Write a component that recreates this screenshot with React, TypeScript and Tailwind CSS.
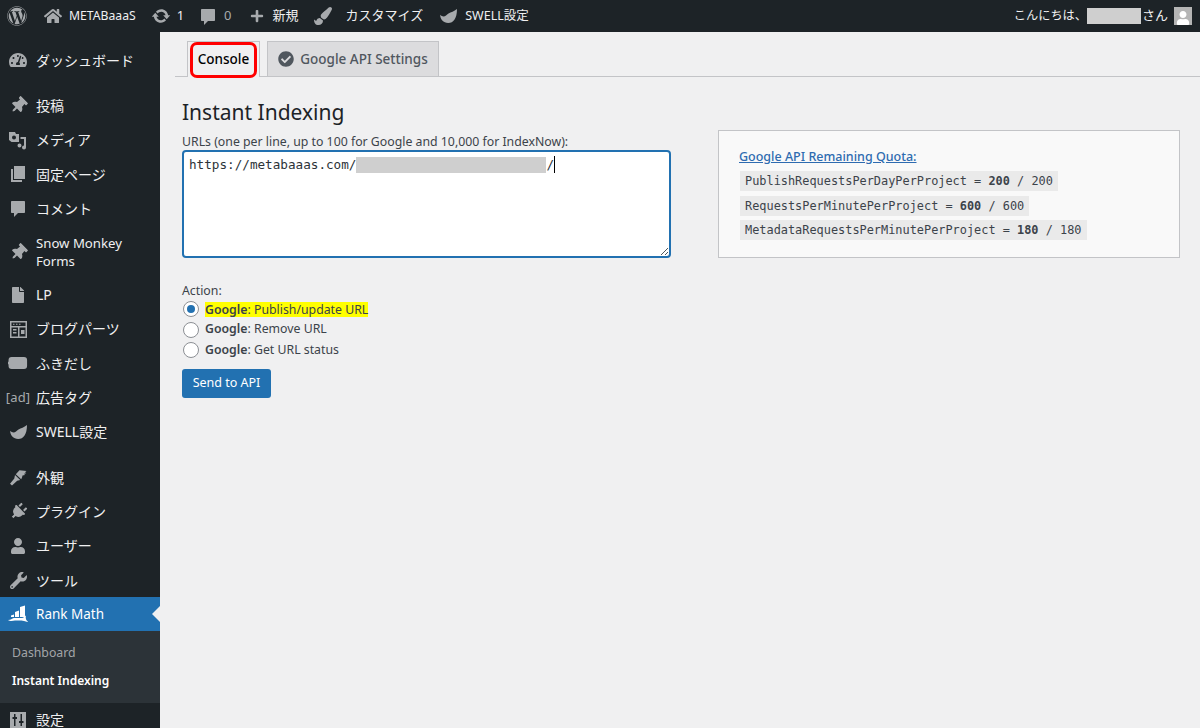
import React from "react";
import { FaWordpress, FaHome, FaPaintBrush, FaPlus, FaThumbtack, FaTachometerAlt, FaFile, FaUser, FaWrench, FaPlug, FaCheckCircle } from "react-icons/fa";

const font = "font-['Noto_Sans','Noto_Sans_CJK_JP',sans-serif]";

function Swell({ s = 20 }: { s?: number }) {
  return (
    <svg width={s} height={s} viewBox="0 0 20 20" fill="currentColor">
      <path d="M19 3c-3 2.500-6 3-8.500 4.500-2 1.200-3 3-5 3-1.200 0-2.300-.8-3.300-1.700-.3 4.200 3.300 8.200 8 8.200 5.300 0 8.800-4.500 8.800-14z" />
    </svg>
  );
}
function Sync() {
  return (
    <svg width="20" height="20" viewBox="0 0 20 20" fill="currentColor">
      <path d="M10.200 3.280c3.530 0 6.430 2.610 6.920 6h2.080l-3.500 4-3.500-4h2.320c-.45-1.970-2.210-3.450-4.320-3.450-1.450 0-2.730.71-3.540 1.780L4.950 5.660C6.230 4.200 8.110 3.280 10.200 3.280zm-.4 13.440c-3.520 0-6.430-2.610-6.920-6H.8l3.500-4c1.170 1.330 2.330 2.670 3.500 4H5.480c.45 1.970 2.210 3.450 4.320 3.450 1.450 0 2.730-.71 3.540-1.780l1.710 1.950c-1.280 1.460-3.150 2.380-5.250 2.380z" />
    </svg>
  );
}
function Comment() {
  return (
    <svg width="20" height="20" viewBox="0 0 20 20" fill="currentColor">
      <path d="M4 3h12c.6 0 1 .4 1 1v10c0 .6-.4 1-1 1h-6l-4 4v-4H4c-.6 0-1-.4-1-1V4c0-.6.4-1 1-1z" />
    </svg>
  );
}
function Appearance() {
  return (
    <svg width="20" height="20" viewBox="0 0 20 20" fill="currentColor">
      <path d="M7.800 7.200L11.500 3.200l7 .8-1.500 1.200 1.300 1-2.300.6 1 1.300-2.500.3L14 10.500l-.8 1.800z" />
      <path d="M7 8l5.200 5-3 .8L4 18.500 2 16.800l4.300-5.300z" />
    </svg>
  );
}
function Media() {
  return (
    <svg width="20" height="20" viewBox="0 0 20 20" fill="currentColor">
      <path d="M1 2h6l1 2h3v8H3.500L1 10zM6 5.500a2 2 0 100 4 2 2 0 000-4z" fillRule="evenodd" />
      <path d="M12.500 7H18v10.500a2 2 0 11-2-2V9h-3.500zM11.500 13.500a2 2 0 110 4 2 2 0 010-4z" />
    </svg>
  );
}
function Pages() {
  return (
    <svg width="20" height="20" viewBox="0 0 20 20" fill="currentColor">
      <path d="M6 2h11v13H6z" />
      <path d="M3 5h2v11h9v2H3z" />
    </svg>
  );
}
function Layout() {
  return (
    <svg width="20" height="20" viewBox="0 0 20 20" fill="currentColor" fillRule="evenodd">
      <path d="M2 2h17v17H2zM3.500 3.500v3.500h14V3.500zM3.500 8.500v9H10v-9zM11.500 8.500v9h6v-9z" />
      <path d="M5 4.800h1.500v1H5zM8 4.800h1.500v1H8zM11 4.800h1.500v1H11zM5 10h3.500v1.500H5zM5 13h3.500v1.500H5zM13 11h3.500v4H13z" />
    </svg>
  );
}
function Bubble() {
  return (
    <svg width="20" height="20" viewBox="0 0 20 20" fill="currentColor">
      <path d="M4.500 4h12a3 3 0 013 3v6a3 3 0 01-3 3h-12a3 3 0 01-3-3v-1.500L0 10l1.500-1.500V7a3 3 0 013-3z" transform="translate(-1 0) scale(1.03 1)" />
    </svg>
  );
}
function RankMath() {
  return (
    <svg width="22" height="20" viewBox="0 0 22 20" fill="currentColor">
      <path d="M13 3l5-1.500V13h-5zM8 8l4-1.500V13H8zM4 11.500l3-1V13H4z" />
      <path d="M1 16c3 0 5-2 6-2h8c1.500 0 2-1.500 4-2.500-.5 1.500-.5 5 2.500 6.500-4-.5-5.500-1.500-7-1.500H8c-2 0-4 1.500-7-.5z" />
    </svg>
  );
}
function Sliders() {
  return (
    <svg width="20" height="20" viewBox="0 0 20 20" fill="currentColor" fillRule="evenodd">
      <path d="M2 2h16v16H2zM6 4v3H4.500v2H6v7h1.500V9H9V7H7.500V4zM12.500 4v7H11v2h1.500v3H14v-3h1.500v-2H14V4z" />
    </svg>
  );
}
const Pin = () => <FaThumbtack size={17} className="rotate-45" />;

type Item = { label: string; icon: React.ReactNode; mt?: boolean; two?: boolean };
const items: Item[] = [
  { label: "ダッシュボード", icon: <FaTachometerAlt size={18} /> },
  { label: "投稿", icon: <Pin />, mt: true },
  { label: "メディア", icon: <Media /> },
  { label: "固定ページ", icon: <Pages /> },
  { label: "コメント", icon: <Comment /> },
  { label: "Snow Monkey Forms", icon: <Pin />, two: true },
  { label: "LP", icon: <FaFile size={16} /> },
  { label: "ブログパーツ", icon: <Layout /> },
  { label: "ふきだし", icon: <Bubble /> },
  { label: "広告タグ", icon: <span className="text-[13px] leading-none tracking-[0.2px] whitespace-nowrap">[ad]</span> },
  { label: "SWELL設定", icon: <Swell /> },
  { label: "外観", icon: <Appearance />, mt: true },
  { label: "プラグイン", icon: <FaPlug size={17} className="rotate-45" /> },
  { label: "ユーザー", icon: <FaUser size={16} /> },
  { label: "ツール", icon: <FaWrench size={17} /> },
];

function Row({ it }: { it: Item }) {
  return (
    <div className={`flex items-center text-[#f0f0f1] ${it.two ? "min-h-[52px] leading-[18px] text-[13.200px] pt-[2px]" : "h-[34.3px] text-[14px]"} ${it.mt ? "mt-[11px]" : ""}`}>
      <span className="w-9 shrink-0 flex justify-center text-[#a7aaad]">{it.icon}</span>
      <span className={it.two ? "w-[100px]" : "whitespace-nowrap"}>{it.label}</span>
    </div>
  );
}

function BarItem({ icon, children, className = "" }: { icon: React.ReactNode; children: React.ReactNode; className?: string }) {
  return (
    <div className={`flex items-center ${className}`}>
      <span className="text-[#a7aaad] flex">{icon}</span>
      {children}
    </div>
  );
}

function Radio({ checked, label, mark }: { checked?: boolean; label: string; mark?: boolean }) {
  return (
    <div className="flex items-center h-[20.400px] text-[12.300px] text-[#3c434a]">
      <span className="w-4 h-4 rounded-full border border-[#8c8f94] bg-white flex items-center justify-center mr-[6px] shrink-0 ml-px">
        {checked && <span className="w-2 h-2 rounded-full bg-[#2271b1]" />}
      </span>
      <span className={mark ? "bg-[#ffff00] leading-[15px]" : ""}>
        <b className="font-semibold">Google</b>: {label}
      </span>
    </div>
  );
}

function Code({ k, v }: { k: string; v: string }) {
  return (
    <div className="flex">
      <span className="bg-[#eaeaea] h-5 px-[5px] text-[11.900px] leading-5 font-['DejaVu_Sans_Mono',monospace] text-[#3c434a] whitespace-pre">
        {k} = <b className="font-semibold">{v.split(" / ")[0]}</b> / {v.split(" / ")[1]}
      </span>
    </div>
  );
}

export default function App() {
  return (
    <div className={`h-[728px] w-[1200px] overflow-hidden flex flex-col bg-[#f0f0f1] ${font}`}>
      <header className="h-8 shrink-0 bg-[#1d2327] flex items-center justify-between text-[13px] text-[#f0f0f1] pl-[7px] pr-2">
        <div className="flex items-center">
          <FaWordpress size={20} className="text-[#a7aaad] mr-[17px]" />
          <BarItem icon={<FaHome size={18} />} className="mr-[15px] gap-[7px]"><span className="text-[12.200px]">METABaaaS</span></BarItem>
          <BarItem icon={<Sync />} className="mr-[14px] gap-[6px]"><span>1</span></BarItem>
          <BarItem icon={<Comment />} className="mr-[18px] gap-[6px]"><span className="text-[#a7aaad]">0</span></BarItem>
          <BarItem icon={<FaPlus size={14} />} className="mr-[15px] gap-[9px]"><span>新規</span></BarItem>
          <BarItem icon={<FaPaintBrush size={18} />} className="mr-[15px] gap-[14px]"><span>カスタマイズ</span></BarItem>
          <BarItem icon={<Swell />} className="gap-[7px]"><span className="text-[12.500px]">SWELL設定</span></BarItem>
        </div>
        <div className="flex items-center">
          <span className="text-[12.200px]">こんにちは、</span>
          <span className="w-[54px] h-4 bg-[#cfcfcf] mr-px" />
          <span>さん</span>
          <span className="w-[18px] h-[18px] bg-[#b5b5b5] ml-[6px] flex items-end justify-center overflow-hidden text-white"><FaUser size={14} /></span>
        </div>
      </header>

      <div className="flex flex-1 min-h-0">
        <aside className="w-40 shrink-0 bg-[#1d2327] pt-[11px]">
          {items.map((it) => <Row key={it.label} it={it} />)}
          <div className="relative h-[34px] bg-[#2271b1] text-white flex items-center text-[13.500px]">
            <span className="w-9 shrink-0 flex justify-center"><RankMath /></span>
            <span>Rank Math</span>
            <span className="absolute right-0 top-[9px] w-0 h-0 border-y-[8px] border-y-transparent border-r-[8px] border-r-[#f0f0f1]" />
          </div>
          <div className="bg-[#2c3338] h-[72px] pt-2 text-[12.300px] pl-3">
            <div className="h-7 flex items-center text-[#c3c4c7cc]">Dashboard</div>
            <div className="h-7 flex items-center text-white font-semibold text-[12px]">Instant Indexing</div>
          </div>
          <div className="h-[34px] flex items-center text-[14px] text-[#f0f0f1]">
            <span className="w-9 shrink-0 flex justify-center text-[#a7aaad]"><Sliders /></span>
            <span className="-mt-[2px]">設定</span>
          </div>
        </aside>

        <main className="flex-1 min-w-0 pt-[9px] text-[#3c434a]">
          <div className="flex items-end h-[36px] border-b border-[#c3c4c7] ml-[15px] pl-3 gap-[7px]">
            <div className="relative w-[73px] h-[36px] -mb-px border border-[#c3c4c7] border-b-0 bg-[#f0f0f1] flex items-center justify-center text-[13.500px] font-medium text-black">
              Console
              <span className="absolute left-[2px] right-[2px] top-0 bottom-[-1px] rounded-[7px] border-[3px] border-[#ff0000]" />
            </div>
            <div className="w-[172px] h-[35px] border border-[#c3c4c7] border-b-0 bg-[#dcdcde] flex items-center justify-center gap-[6px] text-[13.500px] font-medium text-[#50575e]">
              <FaCheckCircle size={16} />
              Google API Settings
            </div>
          </div>

          <div className="flex pl-[22px] pr-5 gap-[47px]">
            <div className="w-[489px] shrink-0">
              <h1 className="text-[21px] leading-[29px] mt-[21px] text-[#1d2327] font-normal">Instant Indexing</h1>
              <div className="text-[12.300px] leading-[18px] mt-[6px] -mb-px whitespace-nowrap">URLs (one per line, up to 100 for Google and 10,000 for IndexNow):</div>
              <div className="relative h-[108px] bg-white border-2 border-[#2271b1] rounded-[4px] pl-[5px] pt-[3px] flex items-start font-['DejaVu_Sans_Mono',monospace] text-[12.650px] leading-[20px] text-[#2c3338]">
                <span>https://metabaaas.com/</span>
                <span className="w-[190px] h-4 mt-[2px] bg-[#cfcfcf] shrink-0" />
                <span>/</span>
                <span className="w-px h-[17px] mt-[1px] bg-black" />
                <svg className="absolute right-0 bottom-0" width="9" height="9" viewBox="0 0 9 9" stroke="#50575e" strokeWidth="1"><path d="M1 8l7-7M5 8l3-3" /></svg>
              </div>
              <div className="text-[12.300px] leading-[18px] mt-[24px]">Action:</div>
              <div className="-mt-px">
                <Radio checked mark label="Publish/update URL" />
                <Radio label="Remove URL" />
                <Radio label="Get URL status" />
              </div>
              <button className="mt-[9px] w-[89px] h-[29px] bg-[#2271b1] rounded-[3px] text-white text-[12.500px]">Send to API</button>
            </div>

            <div className="flex-1 h-[128px] mt-[53px] bg-[#f9f9f9] border border-[#c3c4c7] pl-5 pt-[17px]">
              <div className="text-[12.500px] font-medium leading-[18px] text-[#2e6bb0] underline">Google API Remaining Quota:</div>
              <div className="flex flex-col gap-[4.500px] mt-[5px] ml-px">
                <Code k="PublishRequestsPerDayPerProject" v="200 / 200" />
                <Code k="RequestsPerMinutePerProject" v="600 / 600" />
                <Code k="MetadataRequestsPerMinutePerProject" v="180 / 180" />
              </div>
            </div>
          </div>
        </main>
      </div>
    </div>
  );
}
